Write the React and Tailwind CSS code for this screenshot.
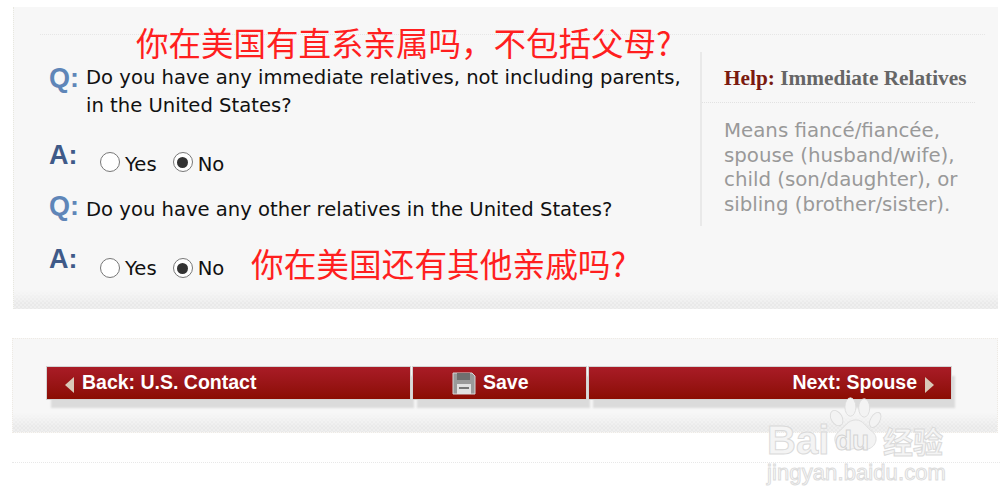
const bodyFont = 'font-["DejaVu_Sans",Verdana,sans-serif]';
const noteFont = 'font-["Noto_Sans_CJK_SC","Liberation_Sans",sans-serif]';

function Radio({ label, checked, dotClass }) {
  return (
    <span className="flex items-start gap-[5px]">
      <span className={`flex h-5 w-5 items-center justify-center rounded-full border border-[#777] bg-white ${dotClass}`}>
        {checked && <span className="h-[11px] w-[11px] rounded-full bg-[#333]" />}
      </span>
      <span className="mt-[5px] text-[19.6px] leading-[28px] text-[#111]">{label}</span>
    </span>
  );
}

function Answer({ className, dotClass }) {
  return (
    <div className={`flex ${className}`}>
      <span className="-mt-[7px] h-[33px] w-[51px] font-['Liberation_Sans'] text-[27px] leading-[32px] font-bold text-[#3f5a88]">A:</span>
      <div className="flex gap-[16px]">
        <Radio label="Yes" dotClass={dotClass} />
        <Radio label="No" dotClass={dotClass} checked />
      </div>
    </div>
  );
}

function Question({ children, className = '', glyphClass = '' }) {
  return (
    <div className={`flex ${className}`}>
      <span className={`h-[26px] w-[37px] shrink-0 font-['Liberation_Sans'] text-[27px] leading-[32px] font-bold text-[#5f86b8] ${glyphClass}`}>Q:</span>
      <p className="text-[19.6px] leading-[28px] whitespace-nowrap text-[#111]">{children}</p>
    </div>
  );
}

// the dotted fade at the foot of both panels
function PanelFoot() {
  return (
    <div className="h-[19px] bg-[repeating-conic-gradient(#e9e9e9_0_25%,#efefef_0_50%)] bg-[length:4px_4px] [mask-image:linear-gradient(to_bottom,transparent,black_70%)]" />
  );
}

function NavButton({ className = '', children }) {
  return (
    <button className={`flex h-[32px] items-center bg-gradient-to-b from-[#a91c26] to-[#8b0d02] font-['Liberation_Sans'] text-[19.5px] font-bold text-white shadow-[4px_9px_2px_#dbdbdb] outline outline-1 outline-[#d4d4d4] ${className}`}>
      {children}
    </button>
  );
}

function SaveIcon() {
  return (
    <svg width="24" height="24" viewBox="0 0 24 24">
      <path d="M1 2h19l3 3v18H1z" fill="#9a9a9a" stroke="#d6d6d6" />
      <rect x="5" y="2" width="13" height="7" fill="#6f6f6f" />
      <rect x="5" y="13" width="14" height="10" fill="#e2e2e2" />
      <rect x="7" y="16" width="10" height="2" fill="#777" />
    </svg>
  );
}

function Watermark() {
  return (
    <div className="pointer-events-none absolute top-[396px] left-[767px] h-[90px] w-[180px] font-['Liberation_Sans'] text-white">
      <svg className="absolute top-0 left-[61px]" width="54" height="57" viewBox="0 0 58 62">
        <g fill="#f3f3f3" stroke="#dcdcdc">
          <ellipse cx="24" cy="12" rx="6" ry="10" />
          <ellipse cx="39" cy="13" rx="6" ry="10" />
          <ellipse cx="9" cy="24" rx="6" ry="9" transform="rotate(-30 9 24)" />
          <ellipse cx="51" cy="26" rx="5" ry="9" transform="rotate(30 51 26)" />
          <path d="M30 26c8 0 11 8 18 13 8 6 3 19-8 19-4 0-7-1-10-1s-7 2-12 1C8 57 3 46 11 39c7-5 10-13 19-13z" />
        </g>
      </svg>
      <span className="absolute top-[24px] left-0 text-[40px] leading-[40px] font-bold text-[#f4f4f4] [-webkit-text-stroke:1px_#dadada]">Bai</span>
      <span className="absolute top-[31px] left-[68px] text-[28px] leading-[28px] font-bold text-[#f4f4f4] [-webkit-text-stroke:1px_#d4d4d4]">du</span>
      <span className={`absolute top-[26px] left-[116px] ${noteFont} text-[30px] leading-[36px] font-bold text-[#f4f4f4] [-webkit-text-stroke:1px_#dadada]`}>经验</span>
      <span className="absolute top-[65px] left-0 text-[22px] leading-[24px] tracking-[0.1px] text-[#fbfbfb] [-webkit-text-stroke:1px_#dcdcdc]">jingyan.baidu.com</span>
    </div>
  );
}

export default function App() {
  return (
    <div className={`relative h-[504px] w-[1000px] overflow-hidden bg-white pt-[7px] ${bodyFont}`}>
      <section className="ml-[13px] mr-[2px] flex h-[302px] flex-col border-l border-dotted border-[#e8e8e0] bg-[#f7f7f7]">
        <div className="mt-[27px] mr-[13px] ml-[26px] h-0 border-t border-dotted border-[#e6e6e6]" />
        <div className="flex flex-1">
          <div className="w-[686px] shrink-0 pl-[35px]">
            <Question className="mt-[29px]" glyphClass="-mt-[2px]">
              Do you have any immediate relatives, not including parents,
              <br />
              in the United States?
            </Question>
            <Answer className="mt-[26px]" dotClass="mt-[6px]" />
            <Question className="mt-[17px]" glyphClass="-mt-[6px]">Do you have any other relatives in the United States?</Question>
            <Answer className="mt-[26px]" dotClass="mt-[8px]" />
          </div>
          <aside className="mt-[17px] h-[174px] w-[275px] border-l-2 border-[#e9e9e9]">
            <h3 className="mt-[13px] h-[38px] border-b border-dotted border-[#e2e2e2] pl-[22px] font-['Liberation_Serif'] text-[21.3px] leading-[26px] font-bold whitespace-nowrap text-[#666]">
              <span className="text-[#7a1a10]">Help:</span> Immediate Relatives
            </h3>
            <p className="mt-[16px] pl-[22px] text-[19.8px] leading-[24.7px] whitespace-nowrap text-[#999]">
              Means fiancé/fiancée,
              <br />
              spouse (husband/wife),
              <br />
              child (son/daughter), or
              <br />
              sibling (brother/sister).
            </p>
          </aside>
        </div>
        <PanelFoot />
      </section>

      <section className="mt-[29px] ml-[12px] mr-[2px] flex h-[95px] flex-col border border-dotted border-[#eeeae4] bg-[#f7f7f7]">
        <div className="flex flex-1 gap-[3px] pt-[28px] pl-[34px]">
          <NavButton className="w-[363px] pl-[18px]">
            <span className="mt-[4px] mr-[8px] h-0 w-0 border-y-[8px] border-r-[9px] border-y-transparent border-r-[#d9c9b8]" />
            Back: U.S. Contact
          </NavButton>
          <NavButton className="w-[173px] pl-[39px]">
            <SaveIcon />
            <span className="ml-[7px]">Save</span>
          </NavButton>
          <NavButton className="w-[362px] justify-end pr-[17px]">
            Next: Spouse
            <span className="mt-[4px] ml-[8px] h-0 w-0 border-y-[8px] border-l-[9px] border-y-transparent border-l-[#d9c9b8]" />
          </NavButton>
        </div>
        <PanelFoot />
      </section>

      <div className="mt-[29px] ml-[12px] border-t border-dotted border-[#e8e8e8]" />

      {/* red notes sit on top of the form */}
      <p className={`absolute top-[19px] left-[136px] ${noteFont} text-[32.5px] leading-[46px] whitespace-nowrap text-[#ff1f1f]`}>你在美国有直系亲属吗，不包括父母?</p>
      <p className={`absolute top-[240px] left-[251px] ${noteFont} text-[32.7px] leading-[46px] whitespace-nowrap text-[#ff1f1f]`}>你在美国还有其他亲戚吗?</p>

      <Watermark />
    </div>
  );
}
